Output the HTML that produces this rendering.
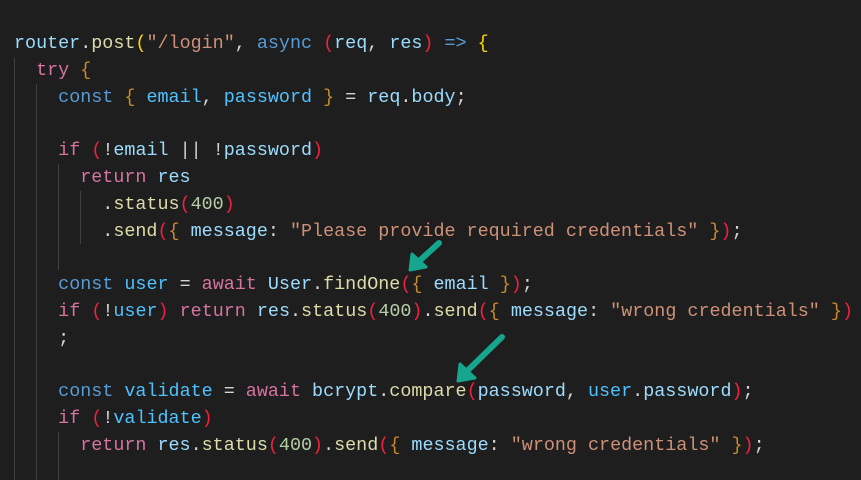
<!DOCTYPE html>
<html><head><style>
html,body{margin:0;padding:0;background:#1e1e1e;width:861px;height:480px;overflow:hidden}
pre{margin:0;position:absolute;left:14px;top:31px;font-family:"Liberation Mono",monospace;font-size:18.4px;line-height:26.8px;color:#d4d4d4;white-space:pre}
.v{color:#9cdcfe}.c{color:#4fc1ff}.f{color:#dcdcaa}.s{color:#ce9178}.k{color:#569cd6}.p{color:#d6739e}.n{color:#b5cea8}
.y{color:#ffd700}.r{color:#f0213f}.b{color:#c88a2a}.w{color:#d4d4d4}
.g{position:absolute;width:1px;background:#404040}
</style></head><body>
<div class="g" style="left:14px;top:58px;height:422px"></div>
<div class="g" style="left:36px;top:84px;height:396px"></div>
<div class="g" style="left:58px;top:164px;height:106px"></div>
<div class="g" style="left:80px;top:191px;height:53px"></div>
<div class="g" style="left:58px;top:432px;height:48px"></div>
<pre><span class="v">router</span>.<span class="f">post</span><span class="y">(</span><span class="s">"/login"</span>, <span class="k">async</span> <span class="r">(</span><span class="v">req</span>, <span class="v">res</span><span class="r">)</span> <span class="k">=&gt;</span> <span class="y">{</span>
  <span class="p">try</span> <span class="b">{</span>
    <span class="k">const</span> <span class="b">{</span> <span class="c">email</span>, <span class="c">password</span> <span class="b">}</span> = <span class="v">req</span>.<span class="v">body</span>;

    <span class="p">if</span> <span class="r">(</span>!<span class="v">email</span> || !<span class="v">password</span><span class="r">)</span>
      <span class="p">return</span> <span class="v">res</span>
        .<span class="f">status</span><span class="r">(</span><span class="n">400</span><span class="r">)</span>
        .<span class="f">send</span><span class="r">(</span><span class="b">{</span> <span class="v">message</span>: <span class="s">"Please provide required credentials"</span> <span class="b">}</span><span class="r">)</span>;

    <span class="k">const</span> <span class="c">user</span> = <span class="p">await</span> <span class="v">User</span>.<span class="f">findOne</span><span class="r">(</span><span class="b">{</span> <span class="v">email</span> <span class="b">}</span><span class="r">)</span>;
    <span class="p">if</span> <span class="r">(</span>!<span class="c">user</span><span class="r">)</span> <span class="p">return</span> <span class="v">res</span>.<span class="f">status</span><span class="r">(</span><span class="n">400</span><span class="r">)</span>.<span class="f">send</span><span class="r">(</span><span class="b">{</span> <span class="v">message</span>: <span class="s">"wrong credentials"</span> <span class="b">}</span><span class="r">)</span>
    ;

    <span class="k">const</span> <span class="c">validate</span> = <span class="p">await</span> <span class="v">bcrypt</span>.<span class="f">compare</span><span class="r">(</span><span class="v">password</span>, <span class="c">user</span>.<span class="v">password</span><span class="r">)</span>;
    <span class="p">if</span> <span class="r">(</span>!<span class="c">validate</span><span class="r">)</span>
      <span class="p">return</span> <span class="v">res</span>.<span class="f">status</span><span class="r">(</span><span class="n">400</span><span class="r">)</span>.<span class="f">send</span><span class="r">(</span><span class="b">{</span> <span class="v">message</span>: <span class="s">"wrong credentials"</span> <span class="b">}</span><span class="r">)</span>;
</pre>
<svg width="861" height="480" style="position:absolute;left:0;top:0">
<g stroke="#16a68e" stroke-width="6" stroke-linecap="round" stroke-linejoin="round" fill="#16a68e">
<line x1="439" y1="243" x2="416" y2="264"/>
<polygon points="410,270 412,254 426,267" stroke-width="3"/>
<line x1="502" y1="337" x2="464" y2="374"/>
<polygon points="458,381 460,364 475,378" stroke-width="3"/>
</g>
</svg>
</body></html>
